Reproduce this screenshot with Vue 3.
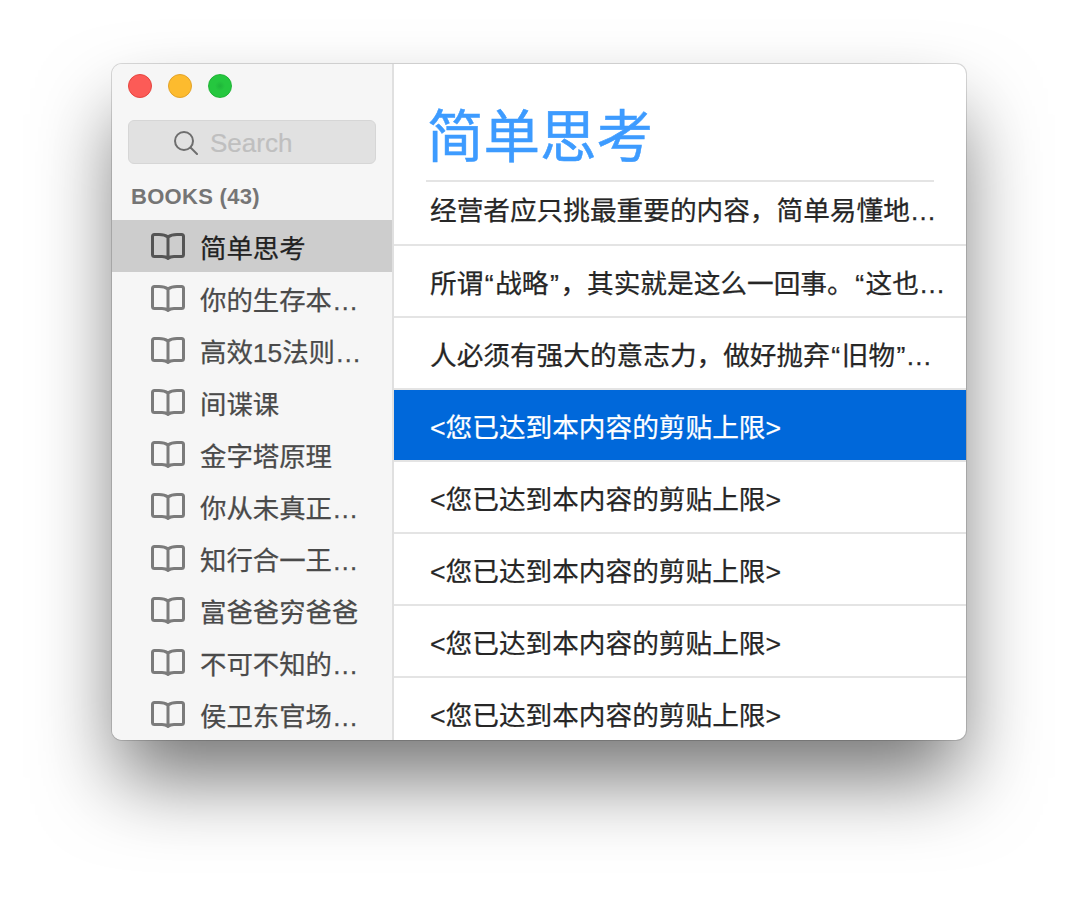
<template>
  <div class="page">
    <div class="window">
      <aside class="sidebar">
        <div class="lights">
          <span class="light red"></span>
          <span class="light yellow"></span>
          <span class="light green"></span>
        </div>
        <div class="search">
          <svg class="search-icon" width="24" height="24" viewBox="0 0 24 24" fill="none" stroke="#6e6e6e" stroke-width="2">
            <circle cx="10" cy="10" r="9" />
            <path d="M16.500 16.500l6.500 6.500" stroke-linecap="round" />
          </svg>
          <span>Search</span>
        </div>
        <div class="books-title">BOOKS (43)</div>
        <ul class="books">
          <li v-for="(book, idx) in books" :key="idx" :class="{ active: idx === 0 }">
            <svg class="book-icon" width="36" height="32" viewBox="0 0 36 32" fill="none" stroke="currentColor" stroke-width="3" stroke-linejoin="round">
              <path d="M18 7C16 5.500 13 4.500 9 4.500H4.500Q2.500 4.500 2.500 6.500V24.500Q2.500 26.500 4.500 26.500H12C14.500 26.500 16.500 27 18 28.500C19.500 27 21.500 26.500 24 26.500H31.500Q33.500 26.500 33.500 24.500V6.500Q33.500 4.500 31.500 4.500H27C23 4.500 20 5.500 18 7V28.500" />
            </svg>
            <span class="book-name">{{ book }}</span>
          </li>
        </ul>
      </aside>
      <main class="content">
        <h1 class="title">简单思考</h1>
        <ul class="notes">
          <li v-for="(note, idx) in notes" :key="idx" :class="{ selected: idx === 3 }">
            <span class="note-text"><span v-for="(part, i) in note.split(/([“”])/)" :key="i" :class="{ quote: i % 2 === 1 }">{{ part }}</span></span>
          </li>
        </ul>
      </main>
    </div>
  </div>
</template>

<script setup>
const books = [
  '简单思考',
  '你的生存本能正在杀死你',
  '高效15法则：谷歌',
  '间谍课',
  '金字塔原理',
  '你从未真正拼过',
  '知行合一王阳明',
  '富爸爸穷爸爸',
  '不可不知的经济学',
  '侯卫东官场笔记',
  '浪潮之巅'
]

const limit = '<您已达到本内容的剪贴上限>'
const notes = [
  '经营者应只挑最重要的内容，简单易懂地传达给员工，这样才能让大家行动起来',
  '所谓“战略”，其实就是这么一回事。“这也想做，那也想做”是不行的',
  '人必须有强大的意志力，做好抛弃“旧物”的准备，才能不断前进',
  limit,
  limit,
  limit,
  limit,
  limit,
  limit
]
</script>

<style>
html,
body {
  background: #fff;
}
</style>

<style scoped>
.page {
  width: 1078px;
  height: 900px;
  padding: 64px 112px 0;
  box-sizing: border-box;
  background: #fff;
  font-family: "Liberation Sans", "Noto Sans CJK SC", sans-serif;
  overflow: hidden;
}
.window {
  display: flex;
  width: 854px;
  height: 676px;
  border-radius: 10px;
  overflow: hidden;
  background: #fff;
  box-shadow: 0 0 0 1px rgba(0, 0, 0, 0.14), 0 44px 80px -6px rgba(0, 0, 0, 0.55);
}
.sidebar {
  flex: none;
  width: 282px;
  box-sizing: border-box;
  border-right: 2px solid #e0e0e0;
  background: #f6f6f6;
  overflow: hidden;
}
.lights {
  display: flex;
  gap: 16px;
  padding: 10px 0 0 16px;
}
.light {
  width: 24px;
  height: 24px;
  border-radius: 50%;
  box-sizing: border-box;
}
.red {
  background: #fc5b57;
  border: 1px solid #e5453f;
}
.yellow {
  background: #fdbb2e;
  border: 1px solid #e2a32a;
}
.green {
  background: radial-gradient(circle, #1fb53a 0, #25c73f 5px);
  border: 1px solid #1fb335;
}
.search {
  display: flex;
  align-items: center;
  gap: 12px;
  box-sizing: border-box;
  height: 44px;
  margin: 22px 16px 0;
  padding: 2px 0 0 45px;
  width: 248px;
  border: 1px solid #d6d6d6;
  border-radius: 6px;
  background: #e1e1e1;
  color: #bfbfbf;
  font-size: 26px;
  -webkit-text-stroke: 0.2px #bfbfbf;
}
.books-title {
  margin: 19px 0 0 19px;
  height: 37px;
  line-height: 28px;
  font-size: 22px;
  font-weight: bold;
  letter-spacing: 0.3px;
  color: #757575;
}
.books {
  margin: 0;
  padding: 0;
  list-style: none;
}
.books li {
  display: flex;
  align-items: center;
  gap: 14px;
  height: 52px;
  padding-left: 38px;
  color: #7b7b7b;
}
.books li.active {
  background: #cdcdcd;
  color: #555;
}
.book-icon {
  flex: none;
}
.book-name {
  width: 164px;
  font-size: 26.4px;
  color: #4a4a4a;
  -webkit-text-stroke: 0.25px #4a4a4a;
  white-space: nowrap;
  overflow: hidden;
  text-overflow: ellipsis;
}
.active .book-name {
  color: #222;
  -webkit-text-stroke: 0.25px #222;
}
.content {
  flex: 1;
  min-width: 0;
  overflow: hidden;
}
.title {
  height: 118px;
  margin: 0 32px;
  box-sizing: border-box;
  padding: 32px 0 0 1px;
  border-bottom: 2px solid #e4e4e4;
  font-size: 56.5px;
  font-weight: 400;
  -webkit-text-stroke: 0.5px #3d9bff;
  line-height: 84px;
  color: #3d9bff;
}
.notes {
  margin: 0;
  padding: 0;
  list-style: none;
}
.notes li {
  height: 72px;
  box-sizing: border-box;
  padding: 0 18px 0 36px;
  border-bottom: 2px solid #e4e4e4;
  line-height: 76px;
  font-size: 26.67px;
  color: #262626;
  -webkit-text-stroke: 0.25px currentColor;
}
.notes li:first-child {
  height: 64px;
  line-height: 58px;
}
.notes li.selected {
  background: #0068da;
  color: #fff;
}
.note-text {
  display: block;
  height: 70px;
  white-space: nowrap;
  overflow: hidden;
  text-overflow: ellipsis;
}
.quote {
  padding: 0 1.5px;
}
</style>
